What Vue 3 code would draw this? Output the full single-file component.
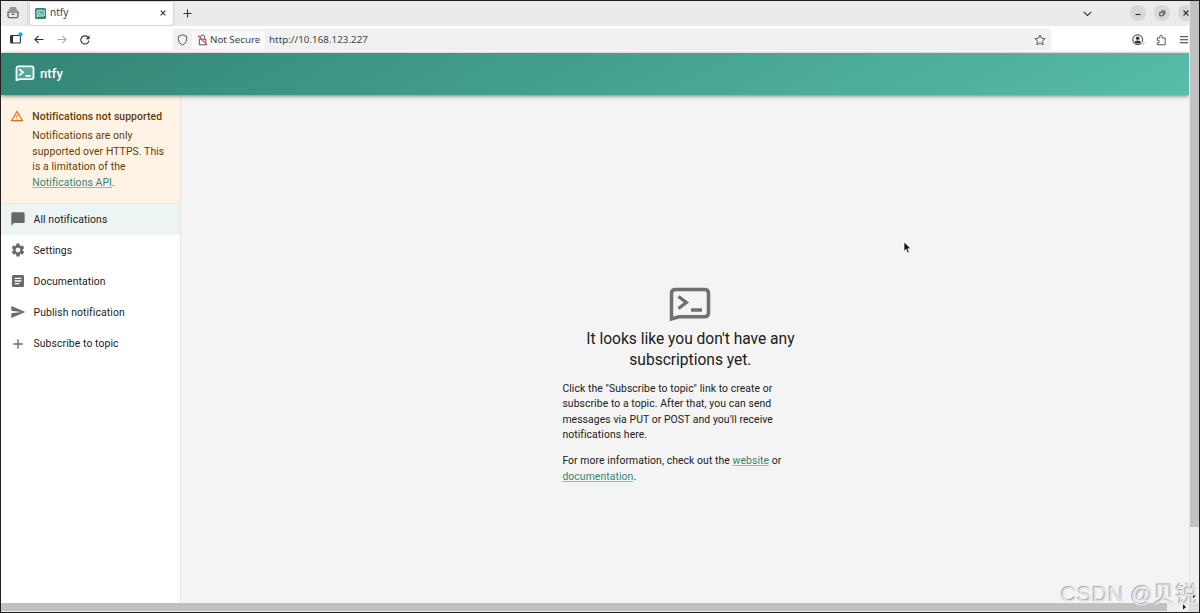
<script setup>
const items = [
  { label: 'All notifications', d: 'M20 2H4c-1.1 0-1.99.9-1.99 2L2 22l4-4h14c1.1 0 2-.9 2-2V4c0-1.1-.9-2-2-2z', active: true },
  { label: 'Settings', d: 'M19.14 12.94c.04-.3.06-.61.06-.94 0-.32-.02-.64-.07-.94l2.03-1.58c.18-.14.23-.41.12-.61l-1.92-3.32c-.12-.22-.37-.29-.59-.22l-2.39.96c-.5-.38-1.03-.7-1.62-.94l-.36-2.54c-.04-.24-.24-.41-.48-.41h-3.84c-.24 0-.43.17-.47.41l-.36 2.54c-.59.24-1.13.57-1.62.94l-2.39-.96c-.22-.08-.47 0-.59.22L2.74 8.87c-.12.21-.08.47.12.61l2.03 1.58c-.05.3-.09.63-.09.94s.02.64.07.94l-2.03 1.58c-.18.14-.23.41-.12.61l1.92 3.32c.12.22.37.29.59.22l2.39-.96c.5.38 1.03.7 1.62.94l.36 2.54c.05.24.24.41.48.41h3.84c.24 0 .44-.17.47-.41l.36-2.54c.59-.24 1.13-.56 1.62-.94l2.39.96c.22.08.47 0 .59-.22l1.92-3.32c.12-.22.07-.47-.12-.61l-2.01-1.58zM12 15.6c-1.98 0-3.6-1.62-3.6-3.6s1.62-3.6 3.6-3.6 3.6 1.62 3.6 3.6-1.62 3.6-3.6 3.6z' },
  { label: 'Documentation', d: 'M19 3H5c-1.1 0-2 .9-2 2v14c0 1.1.9 2 2 2h14c1.1 0 2-.9 2-2V5c0-1.1-.9-2-2-2zm-5 14H7v-2h7v2zm3-4H7v-2h10v2zm0-4H7V7h10v2z' },
  { label: 'Publish notification', d: 'M2.01 21 23 12 2.01 3 2 10l15 2-15 2z' },
  { label: 'Subscribe to topic', d: 'M19 13h-6v6h-2v-6H5v-2h6V5h2v6h6v2z' },
]
</script>

<template>
  <div class="frame">
    <div class="window">
      <div class="tabs">
        <div class="view">
          <svg width="12" height="12" viewBox="0 0 12 12" class="line"><path d="M2.800 1h6.400M1.600 3h8.800M1 5h10v4.200q0 1.600-1.600 1.600H2.600Q1 10.800 1 9.200zM4.500 7.200h3" /></svg>
        </div>
        <div class="tab">
          <svg width="11" height="11" viewBox="0 0 11 11"><rect width="11" height="11" rx="1.500" fill="#338574" /><path d="M2 8.800V3q0-.7.7-.7h6q.7 0 .7.7v4.300q0 .8-.7.8H3.600zM3.500 4l1.300 1.200-1.300 1.200M5.700 6.700h2" fill="#5fb3a2" stroke="#e2f6f0" stroke-width=".8" /></svg>
          <span class="tabname">ntfy</span>
          <svg class="close dark" width="6" height="6" viewBox="0 0 6 6"><path d="M.7.7l4.600 4.600M5.300.7L.7 5.300" /></svg>
        </div>
        <svg class="dark plus" width="9" height="9" viewBox="0 0 9 9"><path d="M4.500.5v8M.5 4.500h8" /></svg>
        <svg class="dark down" width="9" height="6" viewBox="0 0 9 6"><path d="M.7.8l3.800 3.700L8.300.8" /></svg>
        <div class="circle"><svg width="16" height="16" viewBox="0 0 16 16" class="dark"><path d="M5.500 9.500h5.200" /></svg></div>
        <div class="circle"><svg width="16" height="16" viewBox="0 0 16 16" class="dark thin"><path d="M5.800 7.300h3.500v3.500H5.800zM7.300 5.900h3.500v3.600" /></svg></div>
        <div class="circle last"><svg width="16" height="16" viewBox="0 0 16 16" class="dark"><path d="M5.500 5.500l5 5M10.500 5.500l-5 5" /></svg></div>
      </div>
      <div class="toolbar">
        <svg class="dark side" width="14" height="13" viewBox="0 0 14 13"><rect x="1.600" y="3.500" width="9.800" height="7.500" rx=".7" /><path d="M2.900 3.500v7.500" stroke-width="2.400" /><circle cx="11.500" cy="2.300" r="2" fill="#0aa3ee" stroke="none" /></svg>
        <svg class="dark back" width="10" height="9" viewBox="0 0 10 9"><path d="M9.500 4.500H1M4.600.8L.9 4.500l3.700 3.700" /></svg>
        <svg class="forward" width="10" height="9" viewBox="0 0 10 9"><path d="M.5 4.500H9M5.400.8l3.700 3.700-3.700 3.700" /></svg>
        <svg class="dark reload" width="10" height="10" viewBox="0 0 10 10"><path d="M9 5.500A4.100 4.100 0 1 1 7.900 2.100" /><path d="M9.500.3v3.900H5.700z" fill="#333" stroke="none" /></svg>
        <div class="address">
          <svg class="line shield" width="11" height="12" viewBox="0 0 11 12"><path d="M5.500.8l4.200 1.600v3q0 3.700-4.200 5.800Q1.300 9.100 1.300 5.400v-3z" /></svg>
          <div class="secure">
            <svg class="line" width="11" height="12" viewBox="0 0 11 12"><path d="M2.300 5.200h6.500v5.600H2.300zM3.500 5V3.200q0-2.200 2.100-2.200t2.100 2.200V5" /><path d="M1 1.500l9 9.500" stroke="#e94a6b" stroke-width="1.100" /></svg>
            <span>Not Secure</span>
          </div>
          <span class="url">http://10.168.123.227</span>
          <svg class="line star" width="12" height="12" viewBox="0 0 12 12"><path d="M6 1l1.500 3.200 3.500.5-2.500 2.500.6 3.500L6 9l-3.100 1.700.6-3.500L1 4.700l3.500-.5z" /></svg>
        </div>
        <svg class="user" width="13" height="12" viewBox="0 0 13 12"><circle cx="5.700" cy="5.700" r="4.900" fill="none" stroke="#333" /><circle cx="5.700" cy="4.200" r="1.800" fill="#333" /><path d="M2.600 8.300q0-1.900 3.100-1.900t3.100 1.900L7.500 9.500H4z" fill="#333" /><circle cx="10.700" cy="9" r="1.500" fill="#fff" stroke="#aaa" stroke-width=".8" /></svg>
        <svg class="line ext" width="11" height="12" viewBox="0 0 11 12"><path d="M1.300 4h2.500V2.400q0-1.200 1.200-1.200t1.200 1.200V4h3v6.800H1.400V8.600q2.200.2 2.200-1.100T1.400 6.400z" /></svg>
        <svg class="dark menu" width="8" height="8" viewBox="0 0 8 8"><path d="M0 .8h8M0 3.800h8M0 6.800h8" /></svg>
      </div>
      <header>
        <svg width="20" height="17" viewBox="0 0 42 36"><path d="M3 32V7q0-4 4-4h28q4 0 4 4v19q0 4-4 4H11z" fill="#52a797" stroke="#fff" stroke-width="3.800" /><path d="M9 9l8 6.500L9 22M22 23h11" fill="none" stroke="#fff" stroke-width="3.800" /></svg>
        <b>ntfy</b>
      </header>
      <div class="body">
        <aside>
          <div class="alert">
            <svg width="14" height="14" viewBox="0 0 24 24"><path fill="#ed6c02" d="M12 5.990L19.530 19H4.470L12 5.990M12 2L1 21h22L12 2zm1 14h-2v2h2v-2zm0-6h-2v4h2v-4z" /></svg>
            <div class="warn">
              <strong>Notifications not supported</strong>
              <p>Notifications are only<br />supported over HTTPS. This<br />is a limitation of the<br /><a>Notifications API</a>.</p>
            </div>
          </div>
          <nav>
            <div v-for="i in items" :key="i.label" class="item" :class="{ active: i.active }">
              <svg width="16" height="16" viewBox="0 0 24 24"><path :d="i.d" fill="#696969" /></svg>
              <span>{{ i.label }}</span>
            </div>
          </nav>
        </aside>
        <main>
          <div class="empty">
            <svg width="42" height="36" viewBox="0 0 42 36"><path d="M2.500 32V6.500q0-4 4-4h29q4 0 4 4v19.300q0 4-4 4H10z" fill="none" stroke="#707070" stroke-width="3.500" /><path d="M9.500 9.500l7.800 6-7.800 6M22 23h11" fill="none" stroke="#707070" stroke-width="3.400" /></svg>
            <h1>It looks like you don't have any<br />subscriptions yet.</h1>
            <p>Click the "Subscribe to topic" link to create or<br />subscribe to a topic. After that, you can send<br />messages via PUT or POST and you'll receive<br />notifications here.</p>
            <p>For more information, check out the <a>website</a> or<br /><a>documentation</a>.</p>
          </div>
        </main>
      </div>
    </div>
    <div class="vbar"><div class="vthumb"></div></div>
    <div class="hbar"><div class="hthumb"></div></div>
    <div class="corner"></div>
    <svg class="arrows" width="20" height="20" viewBox="0 0 20 20"><path d="M11 5h5l-2.500 3zM3 14.500v5l3-2.500z" fill="#111" /></svg>
    <svg class="cursor" width="9" height="14" viewBox="0 0 9 14"><path d="M1 1v9.300l2.100-2 1.500 3.700 1.700-.7L4.800 7.700H8z" fill="#111" stroke="#fff" stroke-width=".7" /></svg>
    <div class="mark">CSDN @贝锐</div>
  </div>
</template>

<style>
body { margin: 0; overflow: hidden; }
</style>
<style scoped>
* { box-sizing: border-box; }
.frame { position: relative; width: 1200px; height: 613px; border: 1px solid #231f20; display: grid; grid-template: 602px 9px / 1188px 10px; background: #f4f4f4; font-family: Roboto, sans-serif; overflow: hidden; }
svg { display: block; flex: none; }
.window { display: flex; flex-direction: column; overflow: hidden; }
.tabs { height: 25px; background: #ebebeb; display: flex; align-items: center; font-family: "Noto Sans", sans-serif; flex: none; }
.dark, .line, .forward { fill: none; stroke: #333; stroke-width: 1.1; }
.thin { stroke-width: .9; }
.line { stroke: #555; stroke-width: 1; }
.view .line { stroke: #444; stroke-width: 1.1; }
.forward { stroke: #aaa; }
.view { width: 27px; height: 25px; padding: 6px 0 0 6px; border-right: 1px solid #d8d8d8; }
.tab { width: 143px; height: 23px; margin: -1px 0 0 2px; background: #fff; border-radius: 0 0 3px 3px; box-shadow: 0 0 2px #999; display: flex; align-items: center; padding-left: 5px; }
.tabname { font-size: 10px; line-height: 12px; margin: -2px 0 0 4px; color: #444; }
.close { margin-left: auto; margin-right: 7px; }
.plus { margin-left: 10px; }
.down { margin-left: auto; margin-right: 38px; }
.circle { width: 16px; height: 16px; border-radius: 50%; background: #d7d7d7; margin: -1px 8px 0 0; flex: none; }
.circle.last { margin-right: -5px; }
.toolbar { height: 27px; background: #fff; display: flex; align-items: center; font: 9.750px "Noto Sans", sans-serif; color: #444; flex: none; }
.side { margin: -2px 0 0 8px; }
.back { margin-left: 11px; }
.forward { margin-left: 13px; }
.reload { margin-left: 13px; }
.address { width: 878px; height: 21px; margin-left: 83px; background: #f1f1f1; border-radius: 3px; display: flex; align-items: center; }
.shield { margin-left: 4px; }
.secure { width: 73px; height: 18px; margin-left: 4px; background: #fafafa; border-radius: 3px; display: flex; align-items: center; gap: 2px; padding-left: 5px; white-space: nowrap; }
.url { margin-left: 4px; letter-spacing: .04px; }
.star { margin-left: auto; margin-right: 5px; }
.user { margin-left: 81px; }
.ext { margin-left: 11px; }
.menu { margin-left: 13px; }
header { height: 41.600px; flex: none; display: flex; align-items: center; padding-left: 14px; background: linear-gradient(150deg, #338574 0%, #56bda8 100%); color: #fff; box-shadow: 0 1px 4px #777; position: relative; }
header b { font-size: 13px; font-weight: 500; margin-left: 5px; letter-spacing: .1px; }
.body { display: flex; flex: 1; }
aside { width: 180px; background: #fff; border-right: 1px solid #e4e4e4; flex: none; }
.alert { height: 108px; background: #fff3e5; padding: 14.600px 0 0 9.300px; display: flex; color: #663c00; font-size: 10.400px; }
.warn { margin-left: 8px; white-space: nowrap; }
.warn strong { display: block; font-weight: 500; font-size: 10.400px; line-height: 15px; letter-spacing: .08px; }
.warn p { margin: 3.800px 0 0; line-height: 15.600px; letter-spacing: .09px; }
a { color: #338574; text-decoration: underline; text-decoration-color: #8ebcae; text-underline-offset: 1px; }
nav { border-top: 1px solid #e3e7e6; }
.item { height: 31.100px; display: flex; align-items: center; padding-left: 9px; font-size: 10.400px; letter-spacing: .1px; color: #222; }
.item.active { background: #edf4f4; }
.item span { margin-left: 7.500px; }
main { flex: 1; padding: 192.400px 0 0 381.400px; }
.empty { width: 256px; color: #202020; }
.empty svg { margin: 0 auto 6.500px; }
.empty h1 { font-size: 15.600px; font-weight: 400; line-height: 20.800px; margin: 0 0 9.500px; text-align: center; white-space: nowrap; letter-spacing: -.02px; }
.empty p { font-size: 10.400px; line-height: 15.600px; letter-spacing: .08px; margin: 0 0 10.400px; white-space: nowrap; }
.vbar { background: #eee; border-left: 1px solid #e8e8e8; }
.vthumb { height: 526px; background: #c1c1c1; }
.hbar { background: #eee; }
.hthumb { width: 1166px; height: 8px; background: #c1c1c1; }
.corner { background: #ddd; }
.arrows { position: absolute; left: 1179px; top: 589px; }
.cursor { position: absolute; left: 902px; top: 240px; }
.mark { position: absolute; left: 1060px; top: 579px; font: 22px/30px "Liberation Sans", "Noto Sans CJK SC", sans-serif; letter-spacing: .25px; color: #e6e6e6; text-shadow: -1px -1px 1px #a4a4a4; white-space: nowrap; }
</style>
